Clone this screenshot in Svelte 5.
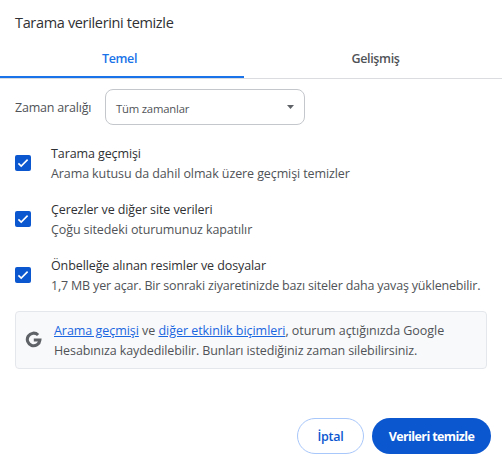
<script>
	const tabs = ['Temel', 'Gelişmiş'];
	let activeTab = $state(0);

	let options = $state([
		{
			title: 'Tarama geçmişi',
			detail: 'Arama kutusu da dahil olmak üzere geçmişi temizler',
			checked: true
		},
		{
			title: 'Çerezler ve diğer site verileri',
			detail: 'Çoğu sitedeki oturumunuz kapatılır',
			checked: true
		},
		{
			title: 'Önbelleğe alınan resimler ve dosyalar',
			detail: '1,7 MB yer açar. Bir sonraki ziyaretinizde bazı siteler daha yavaş yüklenebilir.',
			checked: true
		}
	]);
</script>

<div class="dialog">
	<h1><span>Tarama verilerini temizle</span></h1>

	<div class="tabs" role="tablist">
		{#each tabs as tab, i}
			<button
				class="tab"
				class:active={activeTab === i}
				role="tab"
				aria-selected={activeTab === i}
				onclick={() => (activeTab = i)}
			>
				<span>{tab}</span>
			</button>
		{/each}
	</div>

	<div class="range">
		<span class="range-label">Zaman aralığı</span>
		<button class="select">
			<span>Tüm zamanlar</span>
			<svg width="7" height="4" viewBox="0 0 7 4"><path d="M0 0h7L3.5 4z" fill="#5f6368" /></svg>
		</button>
	</div>

	<div class="options">
		{#each options as option}
			<div class="option">
				<button
					class="checkbox"
					class:checked={option.checked}
					role="checkbox"
					aria-checked={option.checked}
					aria-label={option.title}
					onclick={() => (option.checked = !option.checked)}
				>
					{#if option.checked}
						<svg width="16" height="16" viewBox="0 0 16 16">
							<path d="M3.4 8.4l2.8 2.7 6.4-6.5" fill="none" stroke="#fff" stroke-width="1.6" />
						</svg>
					{/if}
				</button>
				<div class="text">
					<div class="title"><span>{option.title}</span></div>
					<div class="detail"><span>{option.detail}</span></div>
				</div>
			</div>
		{/each}
	</div>

	<div class="info">
		<svg class="google" width="17" height="17" viewBox="0 0 17 17">
			<path
				d="M13.1 4A6.3 6.3 0 1 0 14.9 9H8.8"
				fill="none"
				stroke="#5f6368"
				stroke-width="3.1"
			/>
		</svg>
		<div class="info-text">
			<div class="first"><a href="#history">Arama geçmişi</a> ve <a href="#activity">diğer etkinlik biçimleri</a>, oturum açtığınızda Google</div>
			<div class="second">Hesabınıza kaydedilebilir. Bunları istediğiniz zaman silebilirsiniz.</div>
		</div>
	</div>

	<div class="actions">
		<button class="cancel"><span>İptal</span></button>
		<button class="confirm"><span>Verileri temizle</span></button>
	</div>
</div>

<style>
	:global(body) {
		background: #fff;
	}

	.dialog {
		box-sizing: border-box;
		width: 502px;
		height: 467px;
		overflow: hidden;
		font-family: 'Open Sans', 'Noto Sans', sans-serif;
		font-size: 12.5px;
		line-height: 20px;
		letter-spacing: -0.1px;
		color: #505357;
		white-space: nowrap;
	}

	button {
		box-sizing: border-box;
		margin: 0;
		padding: 0;
		border: 0;
		background: none;
		font: inherit;
		letter-spacing: inherit;
		color: inherit;
		cursor: pointer;
	}

	svg {
		display: block;
		flex: none;
	}

	h1 {
		margin: 0;
		padding: 12px 0 0 15px;
		height: 39px;
		box-sizing: border-box;
		font-size: 14.5px;
		font-weight: 400;
		line-height: 22px;
		color: #303134;
		letter-spacing: -0.34px;
	}

	.tabs {
		display: flex;
		height: 40px;
		box-sizing: border-box;
		border-bottom: 1px solid #dadce0;
		padding-right: 7px;
	}

	.tab {
		width: 244px;
		height: 39px;
		padding-top: 2px;
		border-bottom: 2px solid transparent;
		font-weight: 600;
		letter-spacing: -0.35px;
		color: #505357;
	}

	.tab + .tab {
		padding-left: 19px;
	}

	.tab.active {
		color: #1a73e8;
		border-bottom-color: #1a73e8;
		padding-right: 5px;
	}

	.range {
		display: flex;
		align-items: center;
		padding: 10px 0 0 15px;
	}

	.range-label {
		width: 90px;
		padding-top: 2px;
		letter-spacing: -0.2px;
	}

	.select {
		display: flex;
		align-items: center;
		justify-content: space-between;
		width: 200px;
		height: 36px;
		padding: 0 10px;
		border: 1px solid #c4c7cb;
		border-radius: 8px;
		font-size: 11.3px;
		letter-spacing: -0.2px;
	}

	.select span {
		padding-top: 3px;
	}

	.options {
		display: flex;
		flex-direction: column;
		gap: 16px;
		padding: 19px 0 0 15px;
	}

	.option {
		display: flex;
		align-items: center;
		gap: 20px;
		height: 40px;
	}

	.checkbox {
		width: 16px;
		height: 16px;
		margin-top: -2px;
		border: 1px solid #5f6368;
		border-radius: 2px;
	}

	.checkbox.checked {
		border: 0;
		background: #0b57d0;
	}

	.title {
		color: #303134;
	}

	.option:last-child .detail {
		letter-spacing: -0.18px;
	}

	.info {
		display: flex;
		align-items: center;
		box-sizing: border-box;
		width: 472px;
		height: 58px;
		margin: 15px 0 0 15px;
		padding: 1px 9px 0;
		gap: 12px;
		border: 1px solid #e4e7eb;
		border-radius: 4px;
		background: #f8f9fb;
	}

	.google {
		margin-top: -3px;
	}

	.first {
		letter-spacing: -0.04px;
	}

	a {
		color: #1a66e0;
		text-decoration: underline;
	}

	.actions {
		display: flex;
		justify-content: flex-end;
		gap: 8px;
		padding: 49px 11px 0 0;
		font-weight: 600;
	}

	.cancel,
	.confirm {
		height: 36px;
		padding-top: 2px;
		border-radius: 18px;
	}

	.cancel {
		width: 67px;
		border: 1px solid #a8c7fa;
		color: #0b57d0;
		letter-spacing: -0.3px;
	}

	.confirm {
		width: 119px;
		background: #0b57d0;
		color: #fff;
		font-weight: 700;
		letter-spacing: -0.6px;
	}
</style>
